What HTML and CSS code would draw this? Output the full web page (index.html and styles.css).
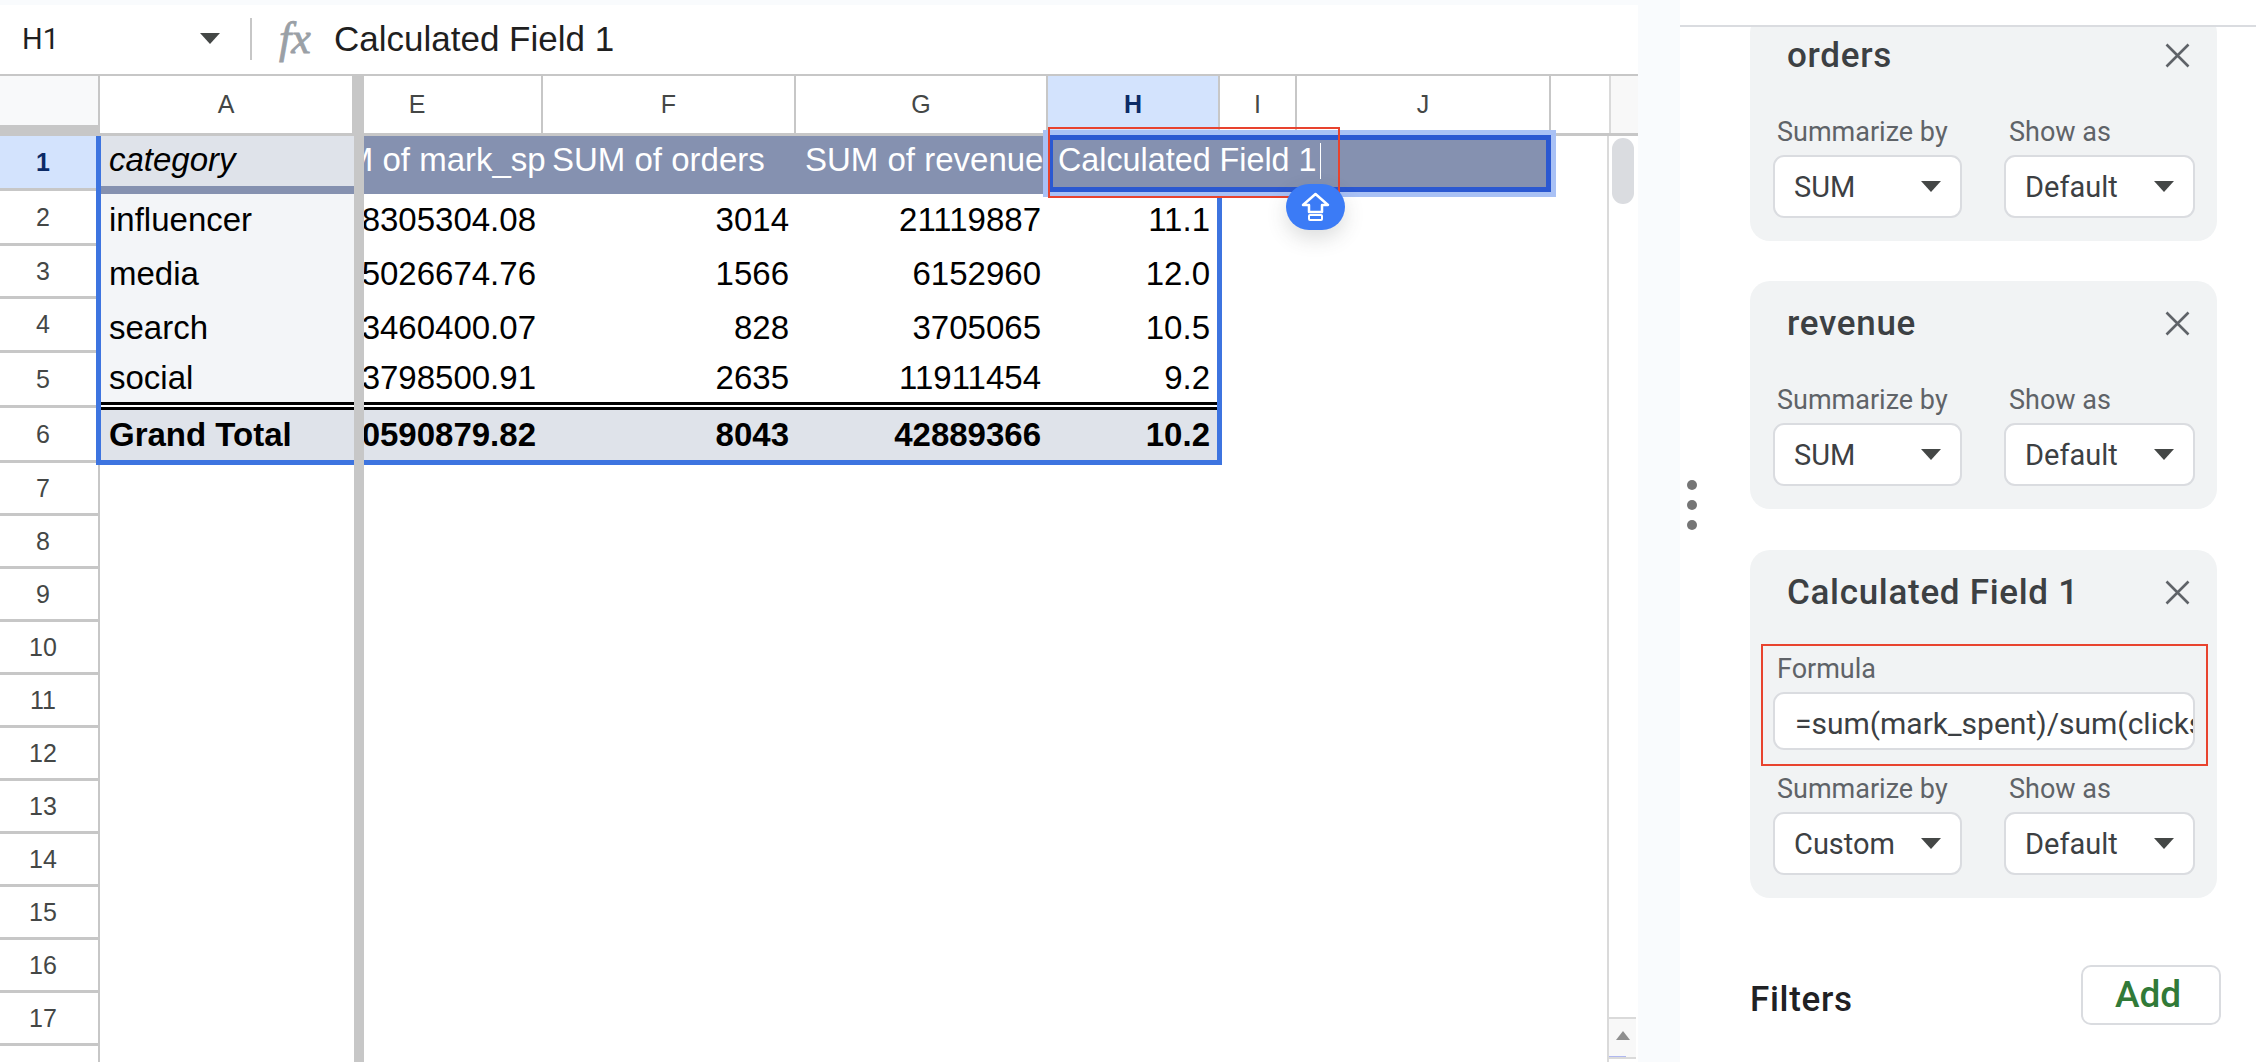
FILE: index.html
```html
<!DOCTYPE html>
<html>
<head>
    <meta charset="UTF-8">
    <meta name="viewport" content="width=device-width, initial-scale=1.0">
    <title>Calculated Field 1</title>
    <link rel="stylesheet" href="styles.css">
</head>
<body>
    <div class="sheet">
        <div class="formula-bar">
            <div class="name-box">H1</div>
            <span class="arrow name-arrow"></span>
            <span class="bar-sep"></span>
            <span class="fx">fx</span>
            <div class="formula-text">Calculated Field 1</div>
        </div>

        <div class="col-headers">
            <div class="corner"></div>
            <div class="col col-a">A</div>
            <div class="col col-e">E</div>
            <div class="col col-f">F</div>
            <div class="col col-g">G</div>
            <div class="col col-h active">H</div>
            <div class="col col-i">I</div>
            <div class="col col-j">J</div>
            <div class="col col-blank"></div>
            <div class="scroll-cap"></div>
        </div>

        <div class="sheet-body">
            <div class="row-nums">
                <div class="rn r1 active">1</div>
                <div class="rn r2">2</div>
                <div class="rn r3">3</div>
                <div class="rn r4">4</div>
                <div class="rn r5">5</div>
                <div class="rn r6">6</div>
                <div class="rn">7</div>
                <div class="rn">8</div>
                <div class="rn">9</div>
                <div class="rn">10</div>
                <div class="rn">11</div>
                <div class="rn">12</div>
                <div class="rn">13</div>
                <div class="rn">14</div>
                <div class="rn">15</div>
                <div class="rn">16</div>
                <div class="rn">17</div>
                <div class="rn">18</div>
            </div>

            <div class="pivot">
                <div class="cell cat-head"><span>category</span></div>
                <div class="cell head clip-head"><span>SUM of mark_spent</span></div>
                <div class="cell head head-f">SUM of orders</div>
                <div class="cell head head-g">SUM of revenue</div>
                <div class="cell head"></div>

                <div class="cell label">influencer</div>
                <div class="cell num num-e">8305304.08</div>
                <div class="cell num">3014</div>
                <div class="cell num">21119887</div>
                <div class="cell num">11.1</div>

                <div class="cell label">media</div>
                <div class="cell num num-e">5026674.76</div>
                <div class="cell num">1566</div>
                <div class="cell num">6152960</div>
                <div class="cell num">12.0</div>

                <div class="cell label">search</div>
                <div class="cell num num-e">3460400.07</div>
                <div class="cell num">828</div>
                <div class="cell num">3705065</div>
                <div class="cell num">10.5</div>

                <div class="cell label">social</div>
                <div class="cell num num-e">3798500.91</div>
                <div class="cell num">2635</div>
                <div class="cell num">11911454</div>
                <div class="cell num">9.2</div>

                <div class="double-line"></div>

                <div class="cell label total">Grand Total</div>
                <div class="cell num num-e total">20590879.82</div>
                <div class="cell num total">8043</div>
                <div class="cell num total">42889366</div>
                <div class="cell num total">10.2</div>
            </div>

            <div class="blank-col-line"></div>
            <div class="scrollbar">
                <div class="thumb"></div>
                <div class="scroll-end">
                    <span class="scroll-up"></span>
                    <span class="scroll-mark"></span>
                </div>
            </div>

            <!-- range + selection sit over the cells -->
            <div class="range"></div>
            <div class="freeze-body"></div>
            <div class="selection">
                <div class="selection-inner">Calculated Field 1<span class="caret"></span></div>
            </div>
            <div class="redbox redbox-cell"></div>
            <div class="shift-pill">
                <svg width="59" height="46" viewBox="0 0 59 46">
                    <path d="M29.5 10 L42 21 H36 V28 H23 V21 H17 Z" fill="none" stroke="#fff" stroke-width="2.5" stroke-linejoin="round"/>
                    <rect x="23" y="31" width="13" height="5" rx="1" fill="none" stroke="#fff" stroke-width="2"/>
                </svg>
            </div>
        </div>
        <div class="freeze-head"></div>
    </div>

    <div class="panel">
        <div class="panel-head"></div>
        <div class="grip"><span></span><span></span><span></span></div>
        <div class="panel-body">
            <div class="card first-card">
                <div class="card-title">
                    <span>orders</span>
                    <svg class="close" width="25" height="25" viewBox="0 0 25 25"><path d="M1.5 1.5 L23.5 23.5 M23.5 1.5 L1.5 23.5"/></svg>
                </div>
                <div class="field-row">
                    <div class="field">
                        <div class="field-label">Summarize by</div>
                        <div class="select">SUM<span class="arrow"></span></div>
                    </div>
                    <div class="field wide">
                        <div class="field-label">Show as</div>
                        <div class="select">Default<span class="arrow"></span></div>
                    </div>
                </div>
            </div>

            <div class="card">
                <div class="card-title">
                    <span>revenue</span>
                    <svg class="close" width="25" height="25" viewBox="0 0 25 25"><path d="M1.5 1.5 L23.5 23.5 M23.5 1.5 L1.5 23.5"/></svg>
                </div>
                <div class="field-row">
                    <div class="field">
                        <div class="field-label">Summarize by</div>
                        <div class="select">SUM<span class="arrow"></span></div>
                    </div>
                    <div class="field wide">
                        <div class="field-label">Show as</div>
                        <div class="select">Default<span class="arrow"></span></div>
                    </div>
                </div>
            </div>

            <div class="card calc-card">
                <div class="card-title">
                    <span>Calculated Field 1</span>
                    <svg class="close" width="25" height="25" viewBox="0 0 25 25"><path d="M1.5 1.5 L23.5 23.5 M23.5 1.5 L1.5 23.5"/></svg>
                </div>
                <div class="formula-field">
                    <div class="field-label">Formula</div>
                    <div class="formula-input"><span>=sum(mark_spent)/sum(clicks)</span></div>
                </div>
                <div class="field-row">
                    <div class="field">
                        <div class="field-label">Summarize by</div>
                        <div class="select">Custom<span class="arrow"></span></div>
                    </div>
                    <div class="field wide">
                        <div class="field-label">Show as</div>
                        <div class="select">Default<span class="arrow"></span></div>
                    </div>
                </div>
                <div class="redbox redbox-formula"></div>
            </div>

            <div class="filters">
                <span class="filters-title">Filters</span>
                <button class="add-btn">Add</button>
            </div>
        </div>
    </div>
</body>
</html>
```

FILE: styles.css
```css
/* page */
body {
    margin: 0;
    width: 2256px;
    height: 1062px;
    overflow: hidden;
    display: flex;
    background-color: #f9fbfd;
    font-family: Roboto, "Liberation Sans", sans-serif;
}

/* sheet side */
.sheet {
    position: relative;
    width: 1638px;
    height: 1062px;
    margin-right: 42px;
    padding-top: 5px;
    box-sizing: border-box;
    background-color: #fff;
    background-clip: content-box;
    overflow: hidden;
}

.formula-bar {
    height: 71px;
    padding-bottom: 2px;
    box-sizing: border-box;
    border-bottom: 2px solid #c7c7c7;
    display: flex;
    align-items: center;
}

.name-box {
    width: 200px;
    padding-left: 22px;
    box-sizing: border-box;
    font-size: 29px;
    color: #1f1f1f;
}

.arrow {
    width: 0;
    height: 0;
    border-left: 10.5px solid transparent;
    border-right: 10.5px solid transparent;
    border-top: 11px solid #444746;
}

.bar-sep {
    width: 2px;
    height: 42px;
    margin-left: 30px;
    background-color: #c7c7c7;
}

.fx {
    width: 55px;
    margin-left: 27px;
    font-family: "Liberation Serif", serif;
    font-style: italic;
    font-size: 44px;
    color: #9aa0a6;
    -webkit-text-stroke: 0.8px #9aa0a6;
}

.formula-text {
    font-family: "Liberation Sans", Arial, sans-serif;
    font-size: 35px;
    color: #1f1f1f;
}

.col-headers {
    height: 60px;
    box-sizing: border-box;
    border-bottom: 3px solid #c7c7c7;
    display: flex;
    font-family: "Liberation Sans", Arial, sans-serif;
    font-size: 25px;
    color: #444746;
}

.corner {
    width: 100px;
    background-color: #f8f9fa;
    border-right: 2px solid #c7c7c7;
    border-bottom: 8px solid #c7c7c7;
    box-sizing: border-box;
}

.col {
    box-sizing: border-box;
    border-right: 2px solid #c7c7c7;
    display: flex;
    align-items: center;
    justify-content: center;
}

.col-a { width: 254px; }
.col-e { width: 189px; padding-right: 61px; }
.col-f { width: 253px; }
.col-g { width: 252px; }
.col-h { width: 172px; }
.col-i { width: 77px; }
.col-j { width: 254px; }
.col-blank { width: 58px; border: 0; }

.col.active {
    background-color: #d3e3fd;
    color: #0b2a66;
    font-weight: bold;
}

.scroll-cap {
    width: 29px;
    box-sizing: border-box;
    border-left: 2px solid #dadada;
    background-color: #f8f8f8;
}

.sheet-body {
    position: relative;
    display: flex;
    height: 926px;
}

/* row numbers */
.row-nums {
    width: 100px;
    box-sizing: border-box;
    border-right: 2px solid #c7c7c7;
    flex-shrink: 0;
    font-family: "Liberation Sans", Arial, sans-serif;
    font-size: 25px;
    color: #444746;
}

.rn {
    height: 53px;
    box-sizing: border-box;
    border-bottom: 3px solid #c7c7c7;
    padding-right: 12px;
    display: flex;
    align-items: center;
    justify-content: center;
}

.rn.r1, .rn.r2, .rn.r5, .rn.r6 { height: 55px; }
.rn.r4 { height: 54px; }

.rn.active {
    background-color: #d3e3fd;
    color: #0b2a66;
    font-weight: bold;
}

/* pivot table */
.pivot {
    width: 1117px;
    display: grid;
    grid-template-columns: 254px 191px 251px 252px 169px;
    grid-template-rows: 58px 52px 55px 53px 48px 8px 50px;
    font-family: "Liberation Sans", Arial, sans-serif;
    font-size: 33px;
    color: #000;
    align-self: flex-start;
}

.cell {
    display: flex;
    align-items: center;
    white-space: nowrap;
    overflow: hidden;
    box-sizing: border-box;
}

.cat-head {
    background-color: #8591b0;
    padding: 0;
    align-items: flex-start;
    font-style: italic;
}

.cat-head span {
    width: 100%;
    height: 50px;
    line-height: 48px;
    padding-left: 9px;
    box-sizing: border-box;
    background-color: #dfe3ea;
}

.head {
    background-color: #8591b0;
    color: #fff;
    padding-bottom: 10px;
}

.clip-head span { margin-left: -54px; }
.head-f { padding-left: 7px; }
.head-g { padding-left: 9px; }

.label {
    background-color: #f3f5f8;
    padding-left: 9px;
}

.num {
    justify-content: flex-end;
    padding-right: 7px;
}

.num-e { padding-right: 9px; }

.total {
    background-color: #dfe3ea;
    font-weight: bold;
}

.double-line {
    grid-column: 1 / -1;
    border-top: 3px solid #000;
    border-bottom: 3px solid #000;
    background-color: #fff;
}

.blank-col-line {
    width: 392px;
    box-sizing: border-box;
    border-right: 2px solid #dadada;
}

.scrollbar {
    width: 27px;
    position: relative;
    background-color: #fff;
}

.thumb {
    width: 22px;
    height: 66px;
    margin: 2px 0 0 3px;
    border-radius: 11px;
    background-color: #dadce0;
}

.scroll-end {
    position: absolute;
    left: 0;
    right: 0;
    top: 881px;
    height: 42px;
    box-sizing: border-box;
    border-top: 2px solid #dadada;
    border-bottom: 2px solid #dadada;
    background-color: #f8f8f8;
}

.scroll-up {
    position: absolute;
    left: 7px;
    top: 12px;
    border-left: 7px solid transparent;
    border-right: 7px solid transparent;
    border-bottom: 9px solid #8f8f8f;
}

.scroll-mark {
    position: absolute;
    left: 0;
    bottom: 0;
    width: 17px;
    height: 1px;
    background-color: #b0b8f0;
}

/* things drawn over the cells */
.range {
    position: absolute;
    left: 96px;
    top: 0;
    width: 1126px;
    height: 329px;
    box-sizing: border-box;
    border: 5px solid #3d74e0;
    border-top: 0;
}

.freeze-body, .freeze-head {
    position: absolute;
    left: 354px;
    width: 10px;
    background-color: #c7c7c7;
}

.freeze-body { top: 0; bottom: 0; }
.freeze-head { top: 76px; height: 60px; }

.selection {
    position: absolute;
    left: 1043px;
    top: -6px;
    width: 513px;
    height: 67px;
    box-sizing: border-box;
    border: 5px solid #a9c1f5;
}

.selection-inner {
    height: 100%;
    padding: 0 0 6px 5px;
    box-sizing: border-box;
    border: 5px solid #2b58d1;
    background-color: #8591b0;
    display: flex;
    align-items: center;
    font-family: "Liberation Sans", Arial, sans-serif;
    font-size: 32.3px;
    color: #fff;
    white-space: nowrap;
}

.caret {
    width: 1px;
    height: 36px;
    margin-left: 3px;
    background-color: #fff;
}

.redbox {
    position: absolute;
    box-sizing: border-box;
    border: 2px solid #e8432e;
}

.redbox-cell {
    left: 1048px;
    top: -9px;
    width: 292px;
    height: 71px;
}

.shift-pill {
    position: absolute;
    left: 1286px;
    top: 48px;
    width: 59px;
    height: 46px;
    border-radius: 23px;
    background-color: #3b7bf6;
    box-shadow: 0 8px 20px rgba(60, 64, 67, 0.18);
    display: flex;
}

/* side panel */
.panel {
    position: relative;
    width: 576px;
    height: 1062px;
    background-color: #fff;
    overflow: hidden;
}

.panel-head {
    height: 27px;
    box-sizing: border-box;
    border-bottom: 2px solid #dadce0;
    background-color: #fff;
    position: relative;
    z-index: 1;
}

.grip {
    position: absolute;
    left: 7px;
    top: 480px;
    display: flex;
    flex-direction: column;
    gap: 10px;
}

.grip span {
    width: 10px;
    height: 10px;
    border-radius: 50%;
    background-color: #757575;
}

.panel-body {
    padding-left: 70px;
    width: 471px;
}

.card {
    position: relative;
    width: 467px;
    margin-bottom: 40px;
    padding: 0 22px 23px 23px;
    box-sizing: border-box;
    border-radius: 20px;
    background-color: #f1f3f4;
}

.first-card { margin-top: -14px; }
.calc-card { margin-top: 41px; margin-bottom: 0; }

.card-title {
    height: 84px;
    margin-bottom: 18px;
    padding: 0 5px 0 15px;
    display: flex;
    align-items: center;
    justify-content: space-between;
    font-size: 35px;
    font-weight: 500;
    color: #3c4043;
    letter-spacing: 0.7px;
}

.card-title span { margin-left: -1px; }

.close path {
    stroke: #5f6368;
    stroke-width: 2.6;
    fill: none;
}

.field-row {
    display: flex;
    gap: 42px;
}

.field { width: 189px; }
.field.wide { width: 191px; }

.field-label {
    height: 34px;
    line-height: 34px;
    margin-bottom: 6px;
    padding-left: 4px;
    font-size: 27px;
    color: #5f6368;
}

.field.wide .field-label { padding-left: 5px; }

.select {
    height: 63px;
    padding: 0 19px 0 19px;
    box-sizing: border-box;
    border: 2px solid #dadce0;
    border-radius: 11px;
    background-color: #fff;
    display: flex;
    align-items: center;
    justify-content: space-between;
    font-size: 29px;
    color: #3c4043;
}

.formula-field { margin-bottom: 22px; }

.formula-input {
    height: 58px;
    padding: 4px 0 0 20px;
    box-sizing: border-box;
    border: 2px solid #dadce0;
    border-radius: 11px;
    background-color: #fff;
    display: flex;
    align-items: center;
    overflow: hidden;
    white-space: nowrap;
    font-size: 30px;
    color: #3c4043;
}

.redbox-formula {
    left: 11px;
    top: 94px;
    width: 447px;
    height: 122px;
}

.filters {
    margin-top: 67px;
    display: flex;
    justify-content: space-between;
    align-items: flex-start;
}

.filters-title {
    margin-top: 14px;
    font-size: 35px;
    font-weight: 500;
    color: #202124;
    letter-spacing: 0.7px;
}

.add-btn {
    width: 140px;
    height: 60px;
    padding: 0 6px 2px 0;
    border: 2px solid #dadce0;
    border-radius: 10px;
    background-color: #fff;
    font-family: Roboto, "Liberation Sans", sans-serif;
    font-size: 37px;
    font-weight: 500;
    color: #317a38;
}
```
